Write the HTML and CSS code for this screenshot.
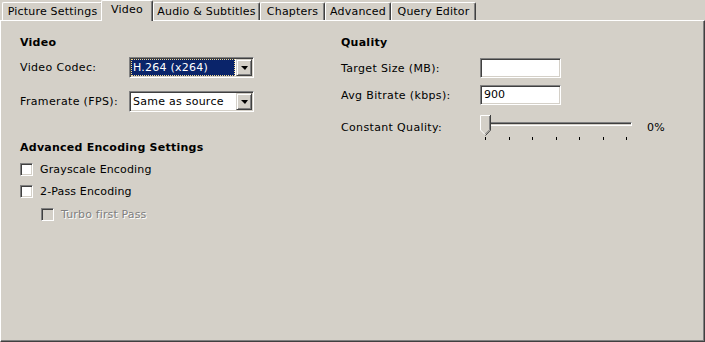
FILE: index.html
```html
<html>
<head>
  <link rel="stylesheet" href="styles.css">
</head>
<body>

<div class="tabs">
  <div class="tab tab-picture">Picture Settings</div>
  <div class="tab tab-video selected">Video</div>
  <div class="tab tab-audio">Audio &amp; Subtitles</div>
  <div class="tab tab-chapters">Chapters</div>
  <div class="tab tab-advanced">Advanced</div>
  <div class="tab tab-query">Query Editor</div>
</div>

<div class="panel">
  <div class="column left">
    <div class="heading">Video</div>
    <div class="row row-codec">
      <span class="label">Video Codec:</span>
      <div class="combo">
        <span class="combo-text focused">H.264 (x264)</span>
        <span class="combo-button"><span class="arrow"></span></span>
      </div>
    </div>
    <div class="row row-fps">
      <span class="label">Framerate (FPS):</span>
      <div class="combo">
        <span class="combo-text">Same as source</span>
        <span class="combo-button"><span class="arrow"></span></span>
      </div>
    </div>

    <div class="heading heading-adv">Advanced Encoding Settings</div>
    <div class="check"><span class="box"></span>Grayscale Encoding</div>
    <div class="check"><span class="box"></span>2-Pass Encoding</div>
    <div class="check sub disabled"><span class="box"></span>Turbo first Pass</div>
  </div>

  <div class="column right">
    <div class="heading">Quality</div>
    <div class="row row-size">
      <span class="label wide">Target Size (MB):</span>
      <div class="textbox"></div>
    </div>
    <div class="row row-bitrate">
      <span class="label wide">Avg Bitrate (kbps):</span>
      <div class="textbox">900</div>
    </div>
    <div class="row row-quality">
      <span class="label wide">Constant Quality:</span>
      <div class="slider">
        <div class="track"></div>
        <svg class="thumb" width="11" height="21" viewBox="0 0 11 21">
          <path d="M0.5 0.5 H10 V15 L5.5 20 L0.5 15 Z" fill="#d4d0c8"/>
          <path d="M0.5 15 V0.5 H10" fill="none" stroke="#fff"/>
          <path d="M10.5 0 V15.2 L5.5 20.5" fill="none" stroke="#404040"/>
          <path d="M9.5 1 V14.8 L5.2 19.2" fill="none" stroke="#808080"/>
          <path d="M0.5 15 L5 19.5" fill="none" stroke="#fff"/>
        </svg>
        <div class="ticks">
          <span></span><span></span><span></span><span></span><span></span><span></span><span></span>
        </div>
      </div>
      <span class="value">0%</span>
    </div>
  </div>
</div>

</body>
</html>
```

FILE: styles.css
```css
body {
    margin: 0;
    width: 705px;
    height: 342px;
    overflow: hidden;
    background: #d4d0c8;
    font-family: "DejaVu Sans", Verdana, sans-serif;
    font-size: 11px;
    color: #000;
}

/* tab strip */
.tabs {
    display: flex;
    align-items: flex-end;
    height: 21px;
    padding-left: 2px;
    letter-spacing: 0.2px;
}
.tab {
    box-sizing: border-box;
    height: 18px;
    margin-bottom: 1px;
    line-height: 17px;
    text-align: center;
    white-space: nowrap;
    border-top: 1px solid #fff;
    border-left: 1px solid #fff;
    border-right: 1px solid #404040;
    border-top-left-radius: 2px;
    border-top-right-radius: 2px;
    box-shadow: inset -1px 0 #808080;
    background: #d4d0c8;
}
.tab.selected {
    position: relative;
    z-index: 1;
    height: 21px;
    margin-bottom: 0;
    padding-top: 1px;
    line-height: 16px;
}
.tab-picture  { width: 101px; margin-right: -2px; }
.tab-video    { width: 52px; }
.tab-audio    { width: 107px; }
.tab-chapters { width: 65px; }
.tab-advanced { width: 66px; }
.tab-query    { width: 85px; }

/* page frame */
.panel {
    box-sizing: border-box;
    display: flex;
    width: 705px;
    height: 322px;
    margin-top: -1px;
    padding-top: 15px;
    border-top: 1px solid #fff;
    border-left: 1px solid #fff;
    border-right: 1px solid #404040;
    border-bottom: 1px solid #404040;
    box-shadow: inset -1px -1px #808080;
}
.column.left {
    width: 321px;
    padding-left: 19px;
}
.column.right {
    flex: 1;
}

.heading {
    height: 14px;
    line-height: 14px;
    font-weight: bold;
    letter-spacing: 0.25px;
}
.heading-adv {
    margin-top: 29px;
}

.row {
    display: flex;
    align-items: center;
}
.label {
    width: 109px;
    letter-spacing: 0.35px;
    white-space: nowrap;
}
.label.wide {
    width: 139px;
}
.row-codec   { margin-top: 7px; height: 21px; }
.row-fps     { margin-top: 13px; height: 21px; }
.row-size    { margin-top: 8px; height: 20px; }
.row-bitrate { margin-top: 7px; height: 20px; }
.row-quality { margin-top: 10px; height: 26px; align-items: flex-start; }
.row-quality .label,
.row-quality .value {
    line-height: 26px;
}

/* sunken controls */
.combo,
.textbox {
    box-sizing: border-box;
    border: 1px solid;
    border-color: #808080 #fff #fff #808080;
    box-shadow: inset 1px 1px #404040, inset -1px -1px #d4d0c8;
    background: #fff;
}
.combo {
    display: flex;
    width: 125px;
    height: 21px;
    padding: 1px;
}
.combo-text {
    flex: 1;
    padding-left: 2px;
    line-height: 17px;
    white-space: nowrap;
    letter-spacing: 0.25px;
}
.combo-text.focused {
    box-sizing: border-box;
    margin-right: 1px;
    padding-left: 1px;
    line-height: 15px;
    color: #fff;
    background: #0a246a;
    border: 1px dotted #f3d98e;
}
.combo-button {
    box-sizing: border-box;
    display: flex;
    align-items: center;
    justify-content: center;
    width: 16px;
    height: 17px;
    background: #d4d0c8;
    border-top: 1px solid #d4d0c8;
    border-left: 1px solid #d4d0c8;
    border-right: 1px solid #404040;
    border-bottom: 1px solid #404040;
    box-shadow: inset 1px 1px #fff, inset -1px -1px #808080;
}
.arrow {
    width: 0;
    height: 0;
    margin-top: 1px;
    border-left: 4px solid transparent;
    border-right: 3px solid transparent;
    border-top: 4px solid #000;
}

.textbox {
    width: 81px;
    height: 20px;
    padding-left: 3px;
    line-height: 18px;
}

/* checkboxes */
.check {
    display: flex;
    align-items: center;
    height: 22px;
    letter-spacing: 0.15px;
}
.heading-adv + .check {
    margin-top: 3px;
}
.box {
    box-sizing: border-box;
    width: 13px;
    height: 13px;
    margin-right: 7px;
    border: 1px solid;
    border-color: #808080 #fff #fff #808080;
    box-shadow: inset 1px 1px #404040, inset -1px -1px #d4d0c8;
    background: #fff;
}
.check.sub {
    margin-top: 1px;
    padding-left: 21px;
}
.check.disabled {
    color: #808080;
    text-shadow: 1px 1px #fff;
}
.check.disabled .box {
    background: #d4d0c8;
}

/* trackbar */
.slider {
    position: relative;
    width: 167px;
    height: 26px;
}
.track {
    position: absolute;
    left: 4px;
    top: 7px;
    box-sizing: border-box;
    width: 148px;
    height: 4px;
    border: 1px solid;
    border-color: #808080 #fff #fff #808080;
    box-shadow: inset 1px 1px #404040;
}
.thumb {
    position: absolute;
    left: 0;
    top: 0;
}
.ticks {
    position: absolute;
    left: 5px;
    top: 22px;
    display: flex;
    justify-content: space-between;
    width: 142px;
}
.ticks span {
    width: 1px;
    height: 3px;
    background: #000;
}
.value {
    white-space: nowrap;
    letter-spacing: 0.3px;
}
```
